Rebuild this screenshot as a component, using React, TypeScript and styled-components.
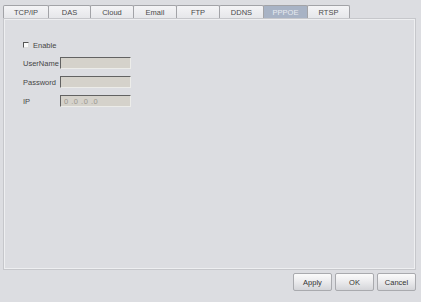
import React, { useState } from 'react';
import styled, { createGlobalStyle } from 'styled-components';

const GlobalStyle = createGlobalStyle`
  html, body {
    margin: 0;
    padding: 0;
    background: #dcdde1;
  }
  body {
    font-family: "Liberation Sans", Arial, sans-serif;
    font-size: 7.5px;
    color: #454545;
  }
`;

const Page = styled.div`
  width: 421px;
  height: 302px;
  box-sizing: border-box;
  padding: 5px 5px 0 3px;
  display: flex;
  flex-direction: column;
`;

const TabBar = styled.div`
  display: flex;
  height: 13px;
`;

const Tab = styled.div<{ $active?: boolean; $w: number }>`
  width: ${p => p.$w}px;
  box-sizing: border-box;
  display: flex;
  align-items: center;
  justify-content: center;
  border: 1px solid #a2a3a7;
  border-bottom: none;
  border-radius: 2px 2px 0 0;
  margin-right: -1px;
  background: ${p => (p.$active ? '#a8b3c5' : 'linear-gradient(#f4f4f6, #e6e7ea)')};
  color: ${p => (p.$active ? '#e8ecf2' : '#4a4a4a')};
  cursor: default;
`;

const Panel = styled.div`
  width: 413px;
  height: 252px;
  box-sizing: border-box;
  border: 1px solid #c6c7cb;
  box-shadow: inset 1px 1px 0 #eeeff1, inset -1px -1px 0 #eeeff1;
  padding: 22px 0 0 19px;
  display: flex;
  flex-direction: column;
`;

const CheckRow = styled.label`
  display: flex;
  align-items: center;
  gap: 4px;
  height: 8px;
  margin-bottom: 8px;
`;

const Box = styled.span<{ $on: boolean }>`
  width: 6px;
  height: 6px;
  box-sizing: border-box;
  background: #fafafa;
  border-top: 1px solid #555;
  border-left: 1px solid #555;
  border-right: 1px solid #ddd;
  border-bottom: 1px solid #ddd;
  ${p => (p.$on ? 'background: #555;' : '')}
`;

const Field = styled.div`
  display: flex;
  align-items: center;
  height: 12px;
  margin-bottom: 7px;
`;

const Label = styled.span`
  width: 37px;
`;

const Input = styled.div`
  width: 71px;
  height: 12px;
  box-sizing: border-box;
  background: #d5d2cb;
  border-top: 1px solid #626262;
  border-left: 1px solid #626262;
  border-right: 1px solid #ecece9;
  border-bottom: 1px solid #ecece9;
  color: #9a978f;
  padding-left: 3px;
  display: flex;
  align-items: center;
  letter-spacing: 0.5px;
`;

const Footer = styled.div`
  display: flex;
  justify-content: flex-end;
  gap: 3px;
  padding-top: 3px;
  width: 413px;
`;

const Button = styled.button`
  width: 39px;
  height: 18px;
  padding: 0;
  font: inherit;
  color: #333;
  border: 1px solid #a9aaae;
  border-radius: 2px;
  background: linear-gradient(#fbfbfb 0%, #ececee 45%, #d4d5d9 100%);
`;

const tabs = [
  { name: 'TCP/IP', w: 46 },
  { name: 'DAS', w: 43 },
  { name: 'Cloud', w: 44 },
  { name: 'Email', w: 44 },
  { name: 'FTP', w: 44 },
  { name: 'DDNS', w: 45 },
  { name: 'PPPOE', w: 45 },
  { name: 'RTSP', w: 43 },
];

const App = () => {
  const [active, setActive] = useState('PPPOE');
  const [enabled, setEnabled] = useState(false);

  return (
    <>
      <GlobalStyle />
      <Page>
        <TabBar>
          {tabs.map(t => (
            <Tab key={t.name} $w={t.w} $active={t.name === active} onClick={() => setActive(t.name)}>
              {t.name}
            </Tab>
          ))}
        </TabBar>
        <Panel>
          <CheckRow onClick={() => setEnabled(!enabled)}>
            <Box $on={enabled} />
            Enable
          </CheckRow>
          <Field>
            <Label>UserName</Label>
            <Input />
          </Field>
          <Field>
            <Label>Password</Label>
            <Input />
          </Field>
          <Field>
            <Label>IP</Label>
            <Input>0 .0 .0 .0</Input>
          </Field>
        </Panel>
        <Footer>
          <Button>Apply</Button>
          <Button>OK</Button>
          <Button>Cancel</Button>
        </Footer>
      </Page>
    </>
  );
};

export default App;
